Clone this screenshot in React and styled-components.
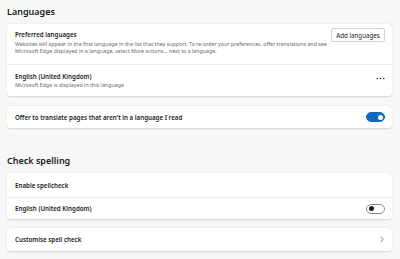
import React from "react";
import styled, { createGlobalStyle } from "styled-components";

const GlobalStyle = createGlobalStyle`
  body {
    margin: 0;
    background: #f7f7f7;
    font-family: "Noto Sans", "Open Sans", sans-serif;
    color: #1b1b1b;
  }
`;

const Page = styled.div`
  padding: 4px 8px 8px 7px;
  display: flex;
  flex-direction: column;
`;

const SectionTitle = styled.h2`
  margin: ${(props) => props.top || 0}px 0 0 0;
  height: ${(props) => props.height}px;
  display: flex;
  align-items: center;
  font-size: 9px;
  font-weight: 600;
  color: #1b1b1b;
`;

const Card = styled.div`
  background: #fff;
  border-radius: 3px;
  box-shadow: 0 0.5px 1.5px rgba(0, 0, 0, 0.14), 0 0 0.5px rgba(0, 0, 0, 0.1);
  margin-top: ${(props) => props.offset || 0}px;
  margin-bottom: ${(props) => props.gap || 0}px;
`;

const Row = styled.div`
  min-height: ${(props) => props.height}px;
  box-sizing: border-box;
  display: flex;
  align-items: ${(props) => (props.top ? "flex-start" : "center")};
  justify-content: space-between;
  padding: ${(props) => (props.top ? "6px" : "0")} 7px 0 8px;
  & + & {
    border-top: 1px solid #ececec;
  }
`;

const Texts = styled.div`
  display: flex;
  flex-direction: column;
`;

const Label = styled.div`
  font-size: 6.2px;
  font-weight: 600;
  line-height: 9px;
  color: #1b1b1b;
`;

const Description = styled.div`
  font-size: 5.3px;
  line-height: 7px;
  color: #6b6b6b;
  margin-top: ${(props) => props.gap || 2}px;
  max-width: 318px;
`;

const Button = styled.button`
  font-family: inherit;
  font-size: 6.2px;
  color: #1b1b1b;
  background: #fff;
  border: 1px solid #d1d1d1;
  border-radius: 2px;
  height: 14px;
  width: 54px;
  padding: 0;
  margin-top: -2px;
  flex-shrink: 0;
`;

const Toggle = styled.div`
  width: 19px;
  height: 10px;
  box-sizing: border-box;
  border-radius: 5px;
  position: relative;
  background: ${(props) => (props.on ? "#0f6cbd" : "#fff")};
  border: 1px solid ${(props) => (props.on ? "#0f6cbd" : "#8a8a8a")};
  &::after {
    content: "";
    position: absolute;
    top: 1.5px;
    left: ${(props) => (props.on ? "10.5px" : "1.5px")};
    width: 5px;
    height: 5px;
    border-radius: 50%;
    background: ${(props) => (props.on ? "#fff" : "#1b1b1b")};
  }
`;

const MoreIcon = () => (
  <svg width="9" height="3" viewBox="0 0 9 3" style={{ marginTop: -4 }}>
    <circle cx="1.2" cy="1.5" r="0.7" fill="#1b1b1b" />
    <circle cx="4.5" cy="1.5" r="0.7" fill="#1b1b1b" />
    <circle cx="7.8" cy="1.5" r="0.7" fill="#1b1b1b" />
  </svg>
);

const Chevron = () => (
  <svg width="6" height="7" viewBox="0 0 6 7">
    <path d="M1.5 0.8 L4.3 3.5 L1.5 6.2" fill="none" stroke="#555" strokeWidth="0.7" />
  </svg>
);

export default function App() {
  return (
    <>
      <GlobalStyle />
      <Page>
        <SectionTitle height={14}>Languages</SectionTitle>
        <Card gap={10} offset={6}>
          <Row height={40} top>
            <Texts>
              <Label>Preferred languages</Label>
              <Description>
                Websites will appear in the first language in the list that they support. To re-order your preferences, offer translations and see
                Microsoft Edge displayed in a language, select More actions... next to a language.
              </Description>
            </Texts>
            <Button>Add languages</Button>
          </Row>
          <Row height={32}>
            <Texts>
              <Label>English (United Kingdom)</Label>
              <Description gap={1}>Microsoft Edge is displayed in this language</Description>
            </Texts>
            <MoreIcon />
          </Row>
        </Card>
        <Card>
          <Row height={22}>
            <Label>Offer to translate pages that aren't in a language I read</Label>
            <Toggle on />
          </Row>
        </Card>
        <SectionTitle height={16} top={24}>Check spelling</SectionTitle>
        <Card gap={9} offset={5}>
          <Row height={24}>
            <Label>Enable spellcheck</Label>
          </Row>
          <Row height={22}>
            <Label>English (United Kingdom)</Label>
            <Toggle />
          </Row>
        </Card>
        <Card>
          <Row height={23}>
            <Label>Customise spell check</Label>
            <Chevron />
          </Row>
        </Card>
      </Page>
    </>
  );
}
